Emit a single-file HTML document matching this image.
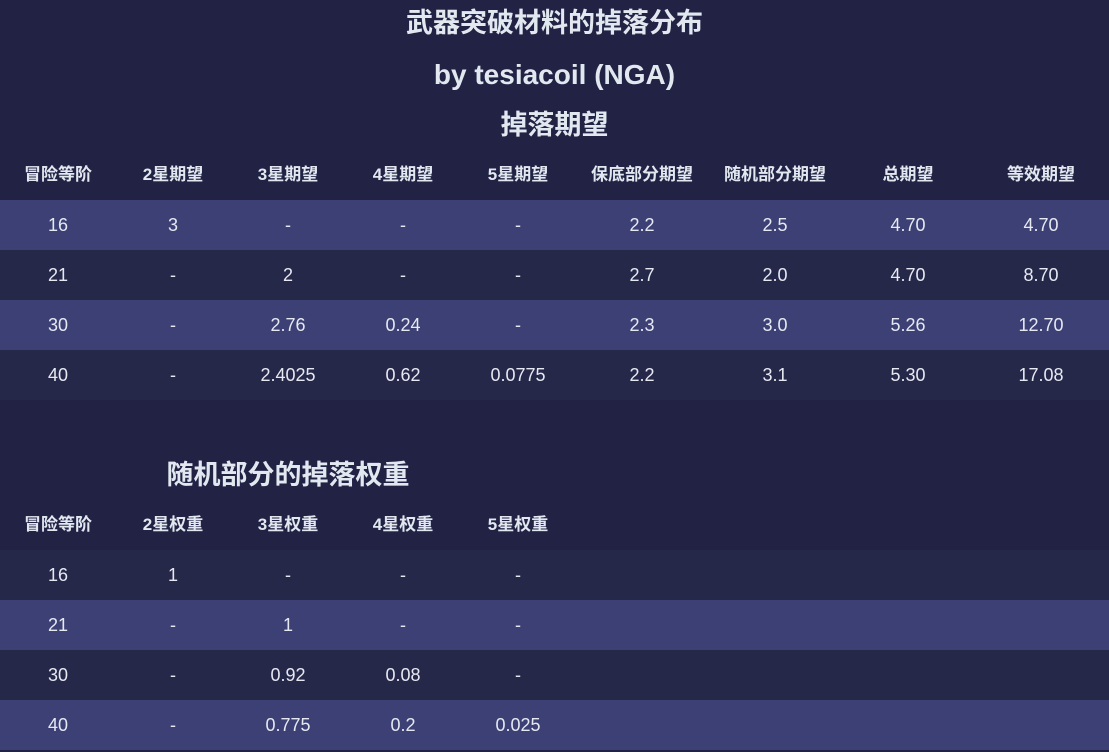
<!DOCTYPE html><html><head><meta charset="utf-8"><style>
body{margin:0;width:1109px;height:752px;background:#212244;overflow:hidden;font-family:"Liberation Sans","Noto Sans CJK SC",sans-serif;color:#e6e9f2;position:relative}
.t{position:absolute;left:0;width:1109px;text-align:center;font-weight:bold;font-size:27px;color:#e2e8f0;line-height:32px}
.row{position:absolute;left:0;width:1109px;height:50px}
.l{background:#3c4074}.d{background:#262849}
.c{position:absolute;text-align:center;top:0;line-height:50px;font-size:18px}
.h .c{font-weight:bold;font-size:17px;color:#e2e8f0}
</style></head><body>
<div class="t" style="top:7px">武器突破材料的掉落分布</div>
<div class="t" style="top:59px;font-size:28px">by tesiacoil (NGA)</div>
<div class="t" style="top:109px">掉落期望</div>
<div class="t" style="top:459px;width:576px">随机部分的掉落权重</div>
<script>
var cx=[58,173,288,403,518,642,775,908,1041];
function row(y,cls,cells,h){var d=document.createElement('div');d.className='row '+cls+(h?' h':'');d.style.top=y+'px';
cells.forEach(function(t,i){var s=document.createElement('div');s.className='c';s.style.left=(cx[i]-70)+'px';s.style.width='140px';s.textContent=t;d.appendChild(s)});document.body.appendChild(d)}
row(150,'',['冒险等阶','2星期望','3星期望','4星期望','5星期望','保底部分期望','随机部分期望','总期望','等效期望'],1);
row(200,'l',['16','3','-','-','-','2.2','2.5','4.70','4.70']);
row(250,'d',['21','-','2','-','-','2.7','2.0','4.70','8.70']);
row(300,'l',['30','-','2.76','0.24','-','2.3','3.0','5.26','12.70']);
row(350,'d',['40','-','2.4025','0.62','0.0775','2.2','3.1','5.30','17.08']);
row(500,'',['冒险等阶','2星权重','3星权重','4星权重','5星权重'],1);
row(550,'d',['16','1','-','-','-']);
row(600,'l',['21','-','1','-','-']);
row(650,'d',['30','-','0.92','0.08','-']);
row(700,'l',['40','-','0.775','0.2','0.025']);
</script>
</body></html>
